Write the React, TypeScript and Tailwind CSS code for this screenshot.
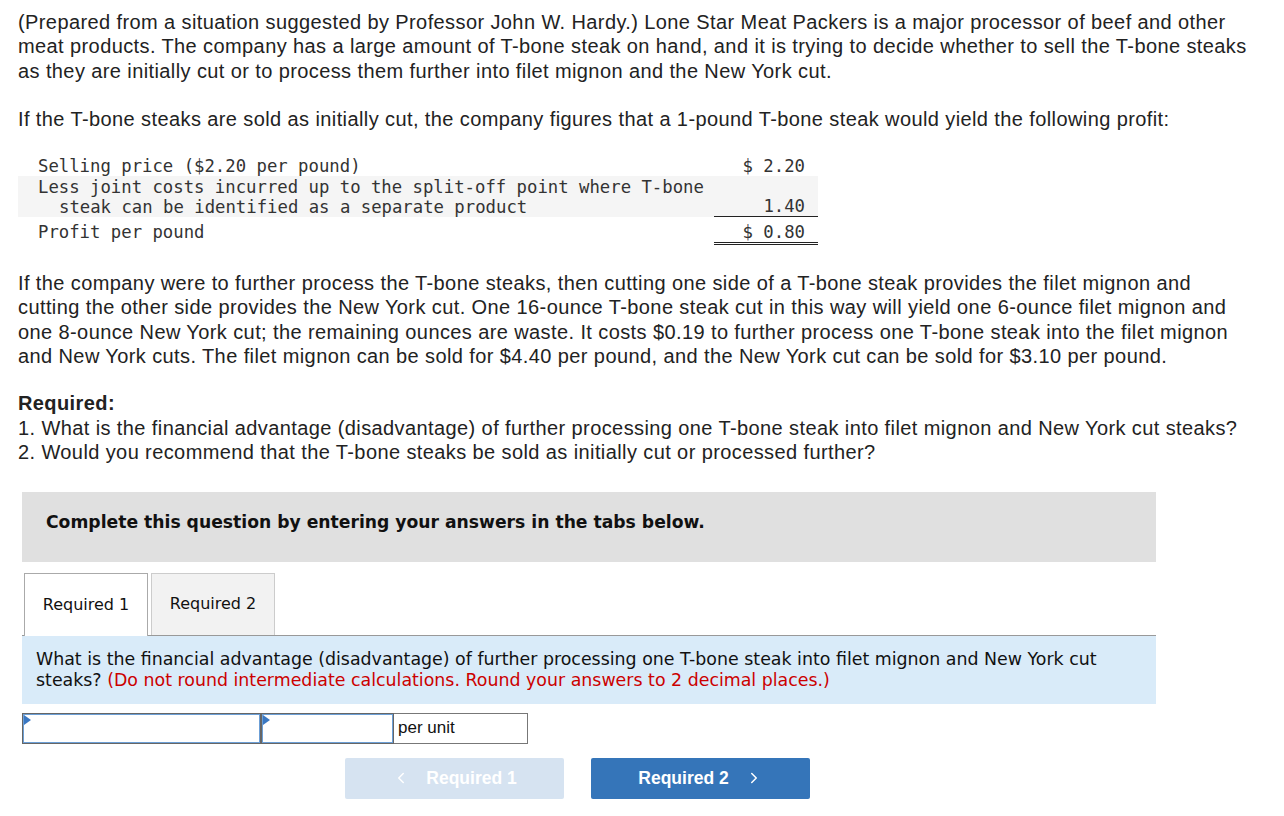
import { ChevronLeft, ChevronRight } from "lucide-react";

const body = "font-['Liberation_Sans',Arial,sans-serif] text-[20px] leading-[24.3px] tracking-[0.4px] text-[#222]";
const mono = "font-['DejaVu_Sans_Mono',monospace] text-[17.3px] leading-[20px] text-[#333]";
const verdana = "font-['DejaVu_Sans',Verdana,sans-serif]";

function AnswerInput({ width }: { width: string }) {
  return (
    <div className={`relative h-[31px] ${width} border border-[#666]`}>
      <div className="h-full w-full border border-[#6c9fd6] bg-white" />
      <span className="absolute left-[1px] top-[1px] h-0 w-0 border-y-[5px] border-l-[7px] border-y-transparent border-l-[#3a78c3]" />
    </div>
  );
}

export default function App() {
  return (
    <div className="min-h-[816px] w-[1284px] bg-white pt-[10px]">
      <div className={`${body} pl-[18px]`}>
        <p>
          (Prepared from a situation suggested by Professor John W. Hardy.) Lone Star Meat Packers is a major processor of beef and other
          <br />
          meat products. The company has a large amount of T-bone steak on hand, and it is trying to decide whether to sell the T-bone steaks
          <br />
          as they are initially cut or to process them further into filet mignon and the New York cut.
        </p>
        <p className="mt-[24px]">
          If the T-bone steaks are sold as initially cut, the company figures that a 1-pound T-bone steak would yield the following profit:
        </p>
      </div>

      {/* profit table */}
      <div className={`${mono} ml-[18px] mt-[25px] w-[800px]`}>
        <div className="flex justify-between pl-[20px] pr-[13px]">
          <span>Selling price ($2.20 per pound)</span>
          <span>$ 2.20</span>
        </div>
        <div className="flex items-end justify-between bg-[#f5f5f5] pt-[1px]">
          <div className="pl-[20px]">
            <div>Less joint costs incurred up to the split-off point where T-bone</div>
            <div className="pl-[21px]">steak can be identified as a separate product</div>
          </div>
          <span className="w-[104px] border-b border-[#222] pr-[13px] text-right">1.40</span>
        </div>
        <div className="flex justify-between pl-[20px] pt-[5px]">
          <span>Profit per pound</span>
          <span className="w-[104px] border-b-[3px] border-double border-[#222] pr-[13px] text-right">$ 0.80</span>
        </div>
      </div>

      <div className={`${body} mt-[26px] pl-[18px]`}>
        <p>
          If the company were to further process the T-bone steaks, then cutting one side of a T-bone steak provides the filet mignon and
          <br />
          cutting the other side provides the New York cut. One 16-ounce T-bone steak cut in this way will yield one 6-ounce filet mignon and
          <br />
          one 8-ounce New York cut; the remaining ounces are waste. It costs $0.19 to further process one T-bone steak into the filet mignon
          <br />
          and New York cuts. The filet mignon can be sold for $4.40 per pound, and the New York cut can be sold for $3.10 per pound.
        </p>
        <p className="mt-[23px] font-bold">Required:</p>
        <p className="leading-[24px]">
          1. What is the financial advantage (disadvantage) of further processing one T-bone steak into filet mignon and New York cut steaks?
          <br />
          2. Would you recommend that the T-bone steaks be sold as initially cut or processed further?
        </p>
      </div>

      {/* instructions */}
      <div className="ml-[22px] mt-[28px] flex h-[70px] w-[1134px] items-center bg-[#e0e0e0] pb-[8px] pl-[24px]">
        <p className={`${verdana} text-[17.2px] font-bold text-[#111]`}>
          Complete this question by entering your answers in the tabs below.
        </p>
      </div>

      {/* tabs */}
      <div className="ml-[22px] mt-[11px] w-[1134px]">
        <div className="flex items-end gap-[3px] border-b border-[#999] pl-[2px]">
          <button className={`-mb-px h-[63px] w-[124px] border border-b-0 border-[#aaa] bg-white ${verdana} text-[16px] text-[#111]`}>
            Required 1
          </button>
          <button className={`h-[62px] w-[124px] border border-b-0 border-[#ccc] bg-[#f2f2f2] ${verdana} text-[16px] text-[#111]`}>
            Required 2
          </button>
        </div>
        <div className={`h-[68px] bg-[#d9ebf9] px-[14px] pt-[13px] ${verdana} text-[17.4px] leading-[21px] text-[#111]`}>
          What is the financial advantage (disadvantage) of further processing one T-bone steak into filet mignon and New York cut
          <br />
          steaks? <span className="text-[#c00]">(Do not round intermediate calculations. Round your answers to 2 decimal places.)</span>
        </div>

        <div className="mt-[9px] flex">
          <AnswerInput width="w-[239px]" />
          <AnswerInput width="w-[133px]" />
          <div className="flex h-[31px] w-[134px] items-center border border-l-0 border-[#777] pl-[4px] font-['Liberation_Sans',Arial,sans-serif] text-[17px] text-[#111]">
            per unit
          </div>
        </div>

        <div className="ml-[323px] mt-[14px] flex gap-[27px] font-['Liberation_Sans',Arial,sans-serif] text-[17.5px] font-bold text-white">
          <button className="flex h-[41px] w-[219px] items-center justify-center gap-[16px] rounded-[2px] bg-[#d6e3f1]">
            <ChevronLeft size={18} strokeWidth={2} />
            <span>Required 1</span>
          </button>
          <button className="flex h-[41px] w-[219px] items-center justify-center gap-[16px] rounded-[2px] bg-[#3575b9]">
            <span>Required 2</span>
            <ChevronRight size={18} strokeWidth={2} />
          </button>
        </div>
      </div>
    </div>
  );
}
